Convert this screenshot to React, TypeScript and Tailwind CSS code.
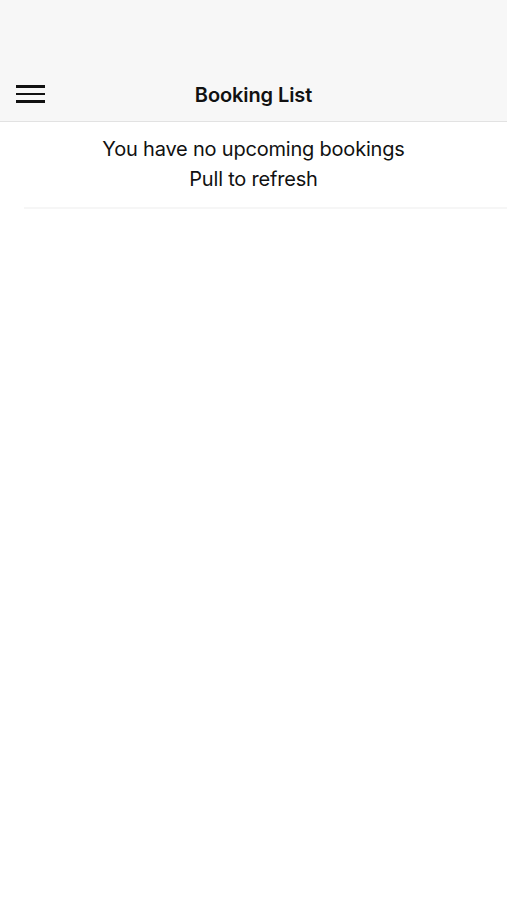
import React from "react";

const App: React.FC = () => {
  return (
    <div className="min-h-[900px] w-full bg-white font-['Inter',sans-serif] text-[#111]">
      {/* Header */}
      <div className="h-[122px] bg-[#f7f7f7] border-b border-[#e2e2e2] flex flex-col justify-end">
        <div className="relative h-[60px] flex items-center justify-center">
          <button className="absolute left-[16px] top-[24px] flex flex-col gap-[5px]" aria-label="Menu">
            <span className="block w-[29px] h-[2.5px] bg-[#111]" />
            <span className="block w-[29px] h-[2.5px] bg-[#111]" />
            <span className="block w-[29px] h-[2.5px] bg-[#111]" />
          </button>
          <h1 className="text-[20px] font-semibold tracking-[-0.1px] mt-[7px]">Booking List</h1>
        </div>
      </div>

      {/* Empty state */}
      <div className="pt-[12px] text-center text-[20px] leading-[30px] tracking-[-0.2px]">
        <p>You have no upcoming bookings</p>
        <p>Pull to refresh</p>
      </div>
      <div className="ml-[24px] mt-[13px] h-[2px] bg-[#f6f6f6]" />
    </div>
  );
};

export default App;
